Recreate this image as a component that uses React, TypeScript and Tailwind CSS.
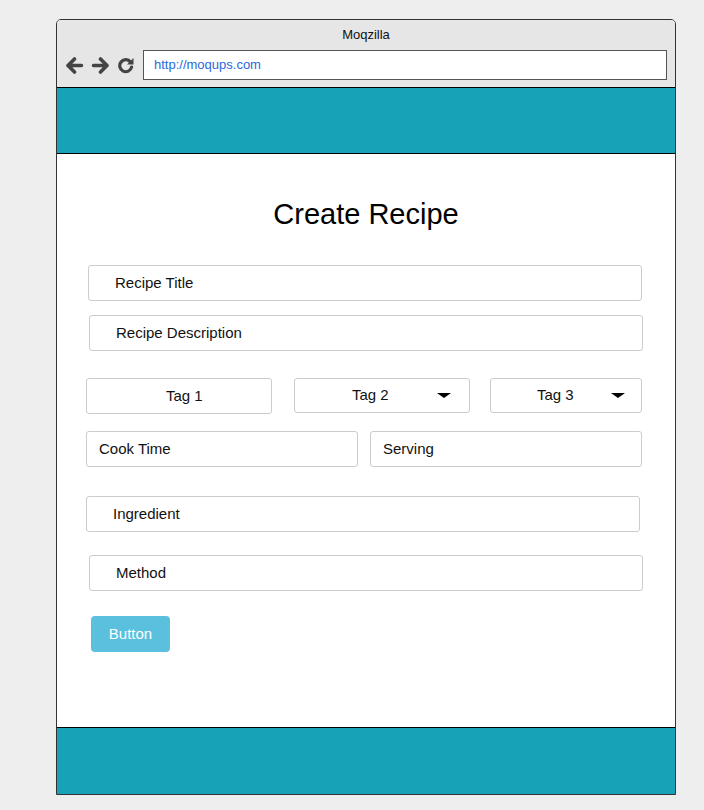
const font = { fontFamily: '"Liberation Sans", Arial, sans-serif' }

function Field({ label, className = '' }: { label: string; className?: string }) {
  return (
    <div
      className={`flex h-[36px] items-center rounded-[3px] border border-[#cccccc] bg-white text-[15px] text-[#111] ${className}`}
    >
      {label}
    </div>
  )
}

function Caret({ className = '' }: { className?: string }) {
  return (
    <span
      className={`h-0 w-0 border-x-[7px] border-t-[5px] border-x-transparent border-t-black ${className}`}
    />
  )
}

function Arrow({ flip = false }: { flip?: boolean }) {
  return (
    <svg
      width="19"
      height="17"
      viewBox="0 0 19 17"
      className={flip ? '-scale-x-100' : ''}
      fill="none"
      stroke="#444"
      strokeWidth="3.6"
      strokeLinecap="round"
      strokeLinejoin="round"
    >
      <path d="M3 8.5h13.5M9.5 2 3 8.5 9.5 15" />
    </svg>
  )
}

function Reload() {
  return (
    <svg width="18" height="18" viewBox="0 0 18 18" fill="none">
      <path
        d="M13.6 6.2A6 6 0 1 0 14.6 11"
        stroke="#444"
        strokeWidth="3.2"
        strokeLinecap="round"
      />
      <path d="M16.5 2v6.5H10z" fill="#444" />
    </svg>
  )
}

export default function App() {
  return (
    <div className="h-[810px] w-[704px] bg-[#eeeeee] pl-[56px] pt-[19px]" style={font}>
      <div className="flex h-[776px] w-[620px] flex-col overflow-hidden rounded-t-[5px] border border-[#333]">
        {/* browser chrome */}
        <div className="h-[67px] bg-[#e6e6e6]">
          <p className="pt-[7px] text-center text-[13px] leading-[16px] text-[#111]">Moqzilla</p>
          <div className="mt-[7px] flex items-center">
            <div className="ml-[8px] flex items-center gap-[7px]">
              <Arrow />
              <Arrow flip />
              <Reload />
            </div>
            <div className="ml-[8px] flex h-[30px] w-[524px] items-center border border-[#555] bg-white pl-[10px] text-[13px] text-[#2a6ad8]">
              http://moqups.com
            </div>
          </div>
        </div>

        {/* header */}
        <div className="h-[67px] border-y border-black bg-[#18a2b8]" />

        {/* content */}
        <div className="flex flex-1 flex-col bg-white">
          <h1 className="pt-[43px] text-center text-[29px] leading-[35px] text-black">Create Recipe</h1>

          <Field label="Recipe Title" className="ml-[31px] mt-[33px] w-[554px] pl-[26px]" />
          <Field label="Recipe Description" className="ml-[32px] mt-[14px] h-[35px] w-[554px] pl-[26px]" />

          <div className="ml-[29px] mt-[27px] flex">
            <Field label="Tag 1" className="h-[35px] w-[186px] pl-[79px]" />
            <div className="ml-[22px] flex h-[35px] w-[176px] items-center rounded-[3px] border border-[#cccccc] pl-[57px] text-[15px] text-[#111]">
              Tag 2
              <Caret className="ml-[48px]" />
            </div>
            <div className="ml-[20px] flex h-[35px] w-[152px] items-center rounded-[3px] border border-[#cccccc] pl-[46px] text-[15px] text-[#111]">
              Tag 3
              <Caret className="ml-[37px]" />
            </div>
          </div>

          <div className="ml-[29px] mt-[17px] flex gap-[12px]">
            <Field label="Cook Time" className="h-[35px] w-[272px] pl-[12px]" />
            <Field label="Serving" className="h-[35px] w-[272px] pl-[12px]" />
          </div>

          <Field label="Ingredient" className="ml-[29px] mt-[29px] w-[554px] pl-[26px]" />
          <Field label="Method" className="ml-[32px] mt-[23px] h-[35px] w-[554px] pl-[26px]" />

          <button className="ml-[34px] mt-[25px] h-[36px] w-[79px] rounded-[4px] bg-[#5bc0de] text-[15px] text-white">
            Button
          </button>
        </div>

        {/* footer */}
        <div className="h-[67px] border-t border-black bg-[#18a2b8]" />
      </div>
    </div>
  )
}
